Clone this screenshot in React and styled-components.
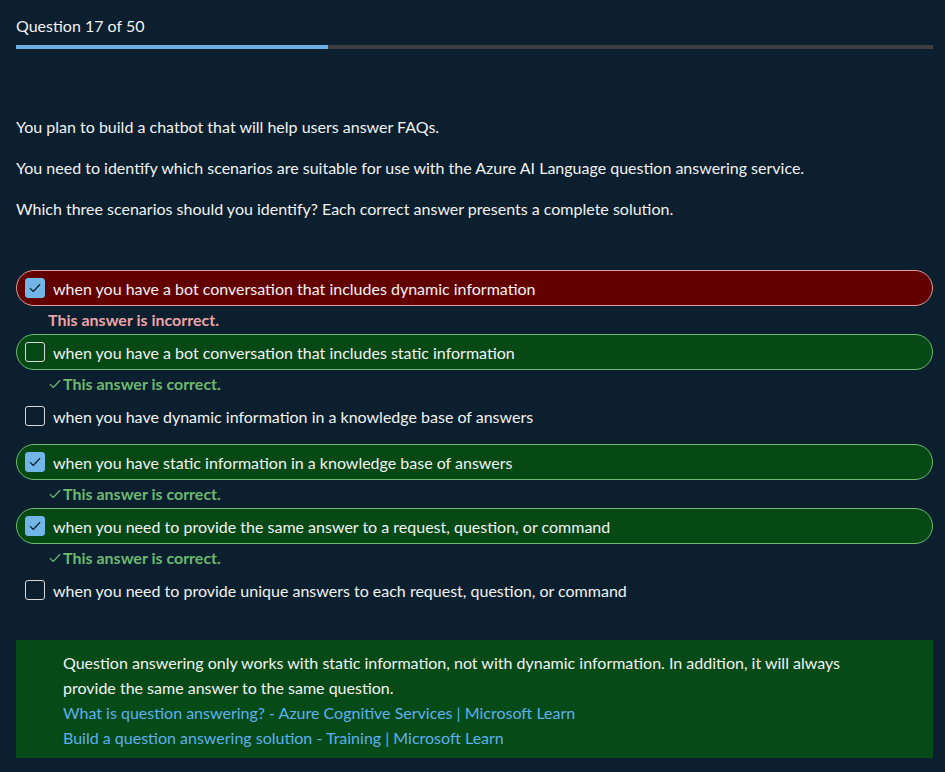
import React from 'react';
import styled, { createGlobalStyle } from 'styled-components';

const Global = createGlobalStyle`
  html, body {
    margin: 0;
    background: #0b1f2e;
  }
  body {
    font-family: Lato, "Open Sans", sans-serif;
    color: #f2f2f2;
    font-size: 16px;
  }
`

const Page = styled.div`
  padding: 16px 12px 14px 16px;
`

const Header = styled.div`
  line-height: 19px;
  margin-bottom: 10px;
`

const Track = styled.div`
  height: 4px;
  background: #3d3f42;
  margin-bottom: 67px;
`

const Fill = styled.div`
  height: 100%;
  background: #6cb1e6;
`

const Para = styled.p`
  margin: 0 0 20px;
  line-height: 21px;
`

const Options = styled.div`
  margin-top: 51px;
  margin-bottom: 32px;
`

const Item = styled.div`
  margin-bottom: ${p => (p.$feedback ? '0' : '10px')};
`

const Row = styled.div`
  display: flex;
  align-items: center;
  gap: 8px;
  height: 36px;
  box-sizing: border-box;
  padding: 0 8px;
  border-radius: 18px;
  border: 1px solid ${p => (p.$state === 'wrong' ? '#e39a9a' : p.$state === 'right' ? '#6fb970' : 'transparent')};
  background: ${p => (p.$state === 'wrong' ? '#620000' : p.$state === 'right' ? '#074915' : 'transparent')};
`

const Box = styled.span`
  width: 20px;
  height: 20px;
  box-sizing: border-box;
  border-radius: 3px;
  flex: none;
  display: flex;
  align-items: center;
  justify-content: center;
  border: 1px solid ${p => (p.$checked ? '#72b6e8' : '#d8d8d8')};
  background: ${p => (p.$checked ? '#72b6e8' : 'transparent')};
`

const Feedback = styled.div`
  height: 28px;
  line-height: 28px;
  padding-left: 32px;
  font-weight: 700;
  color: ${p => (p.$ok ? '#6db86f' : '#eba3a8')};
  display: flex;
  align-items: center;
  gap: 1px;
`

const Explain = styled.div`
  background: #064a17;
  padding: 10px 47px 8px;
  line-height: 25px;
`

const Link = styled.a`
  display: block;
  color: #5fb0ee;
  text-decoration: none;
`

const Tick = ({ color, size = 14 }) => (
  <svg width={size} height={size} viewBox="0 0 16 16" fill="none">
    <path d="M2.5 8.5l3.5 3.5 7.5-8" stroke={color} strokeWidth="1.3" strokeLinecap="round" strokeLinejoin="round" />
  </svg>
)

const options = [
  { text: 'when you have a bot conversation that includes dynamic information', checked: true, state: 'wrong' },
  { text: 'when you have a bot conversation that includes static information', checked: false, state: 'right' },
  { text: 'when you have dynamic information in a knowledge base of answers', checked: false },
  { text: 'when you have static information in a knowledge base of answers', checked: true, state: 'right' },
  { text: 'when you need to provide the same answer to a request, question, or command', checked: true, state: 'right' },
  { text: 'when you need to provide unique answers to each request, question, or command', checked: false },
]

export default function App() {
  return (
    <Page>
      <Global />
      <Header>Question 17 of 50</Header>
      <Track>
        <Fill style={{ width: `${(17 / 50) * 100}%` }} />
      </Track>
      <Para>You plan to build a chatbot that will help users answer FAQs.</Para>
      <Para>You need to identify which scenarios are suitable for use with the Azure AI Language question answering service.</Para>
      <Para>Which three scenarios should you identify? Each correct answer presents a complete solution.</Para>
      <Options>
        {options.map((o, i) => (
          <Item key={i} $feedback={!!o.state}>
            <Row $state={o.state}>
              <Box $checked={o.checked}>{o.checked && <Tick color="#0b1f2e" />}</Box>
              <span>{o.text}</span>
            </Row>
            {o.state === 'wrong' && <Feedback>This answer is incorrect.</Feedback>}
            {o.state === 'right' && (
              <Feedback $ok>
                <Tick color="#6db86f" />
                This answer is correct.
              </Feedback>
            )}
          </Item>
        ))}
      </Options>
      <Explain>
        Question answering only works with static information, not with dynamic information. In addition, it will always provide the same answer to the same question.
        <Link href="#">What is question answering? - Azure Cognitive Services | Microsoft Learn</Link>
        <Link href="#">Build a question answering solution - Training | Microsoft Learn</Link>
      </Explain>
    </Page>
  )
}
